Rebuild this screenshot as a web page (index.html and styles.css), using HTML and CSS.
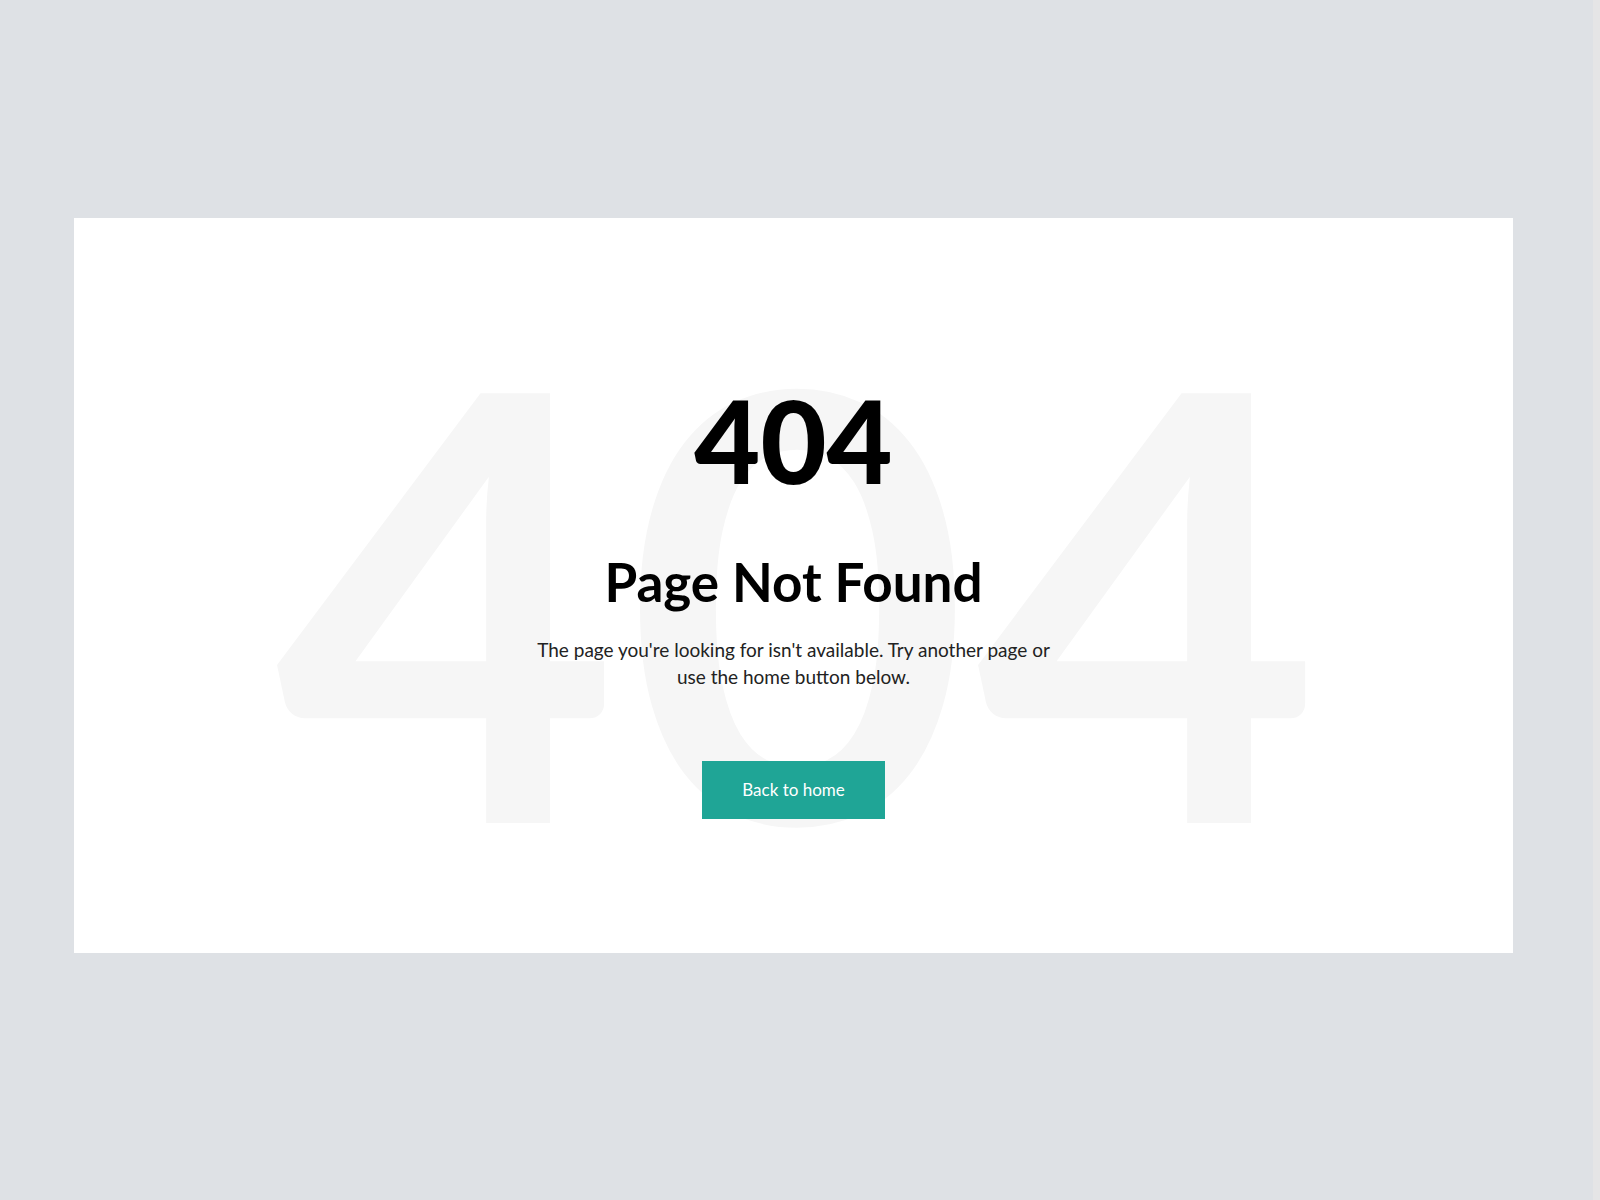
FILE: index.html
```html
<!DOCTYPE html>
<html lang="en">
<head>
<meta charset="utf-8">
<title>404 - Page Not Found</title>
<link rel="stylesheet" href="styles.css">
</head>
<body>
<div class="page">
  <main class="stage">
    <section class="card">
      <div class="ghost" aria-hidden="true">404</div>
      <div class="content">
        <div class="code">404</div>
        <h1 class="title">Page Not Found</h1>
        <p class="lead">The page you're looking for isn't available. Try another page or use the home button below.</p>
        <a class="btn" href="#">Back to home</a>
      </div>
    </section>
  </main>
  <div class="scrollbar"></div>
</div>
</body>
</html>
```

FILE: styles.css
```css
* { box-sizing: border-box; }
html, body { margin: 0; padding: 0; height: 100%; }
body {
  font-family: "Lato", "Noto Sans", sans-serif;
  background: #dee1e5;
  color: #000;
  overflow: hidden;
}
.page {
  display: flex;
  height: 1200px;
}
.stage {
  flex: 1;
  padding: 218px 80px 0 74px;
}
.scrollbar {
  width: 7px;
  background: #e5e5e6;
}
.card {
  position: relative;
  background: #fff;
  height: 735px;
  overflow: hidden;
}
.ghost {
  position: absolute;
  left: 0;
  right: 0;
  top: 79px;
  text-align: center;
  font-size: 594px;
  line-height: 1;
  font-weight: 700;
  color: #f6f6f6;
  letter-spacing: 6px;
  padding-left: 14px;
}
.content {
  position: relative;
  display: flex;
  flex-direction: column;
  align-items: center;
  padding-top: 165px;
  text-align: center;
}
.code {
  font-size: 114px;
  line-height: 1;
  font-weight: 900;
}
.title {
  margin: 53px 0 0;
  font-size: 53px;
  line-height: 1.2;
  font-weight: 700;
}
.lead {
  margin: 22px 0 0;
  width: 528px;
  font-size: 19px;
  line-height: 27px;
  color: #222;
}
.btn {
  margin-top: 71px;
  display: flex;
  align-items: center;
  justify-content: center;
  width: 183px;
  height: 58px;
  background: #1fa596;
  color: #fff;
  font-size: 17px;
  text-decoration: none;
}
```
